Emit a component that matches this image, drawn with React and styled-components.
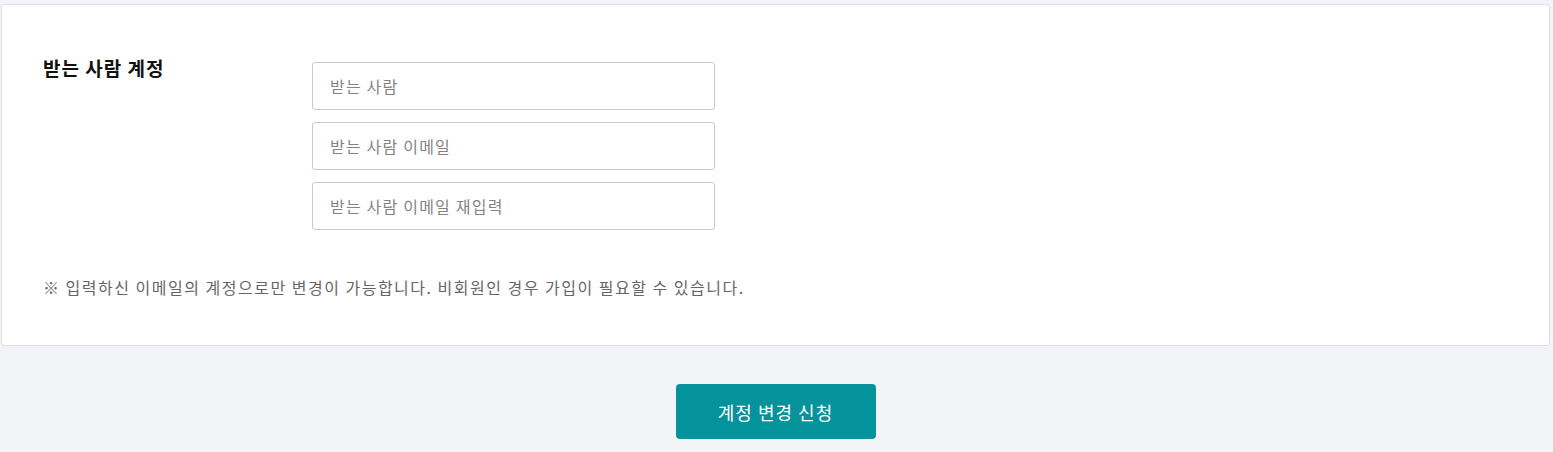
import React from "react";
import styled, { createGlobalStyle } from "styled-components";

const GlobalStyle = createGlobalStyle`
  html, body {
    margin: 0;
    padding: 0;
    background: #f3f4f8;
    font-family: "Noto Sans CJK KR", "Noto Sans", sans-serif;
  }
`;

const Page = styled.div`
  padding: 4px 3px 0 1px;
`;

const Card = styled.section`
  background: #fff;
  border: 1px solid #dde0e6;
  border-radius: 3px;
  padding: 51px 41px 47px;
`;

const FieldRow = styled.div`
  display: flex;
  align-items: flex-start;
`;

const Label = styled.div`
  width: 269px;
  font-size: 19px;
  font-weight: 700;
  line-height: 23px;
  color: #111;
  letter-spacing: 1px;
`;

const Inputs = styled.div`
  display: flex;
  flex-direction: column;
  gap: 12px;
  padding-top: 6px;
`;

const Input = styled.input`
  box-sizing: border-box;
  width: 403px;
  height: 48px;
  border: 1px solid #c3cad6;
  border-radius: 3px;
  padding: 0 17px;
  font-family: inherit;
  font-size: 16px;
  letter-spacing: 1.2px;
  color: #333;
  outline: none;

  &::placeholder {
    color: #848484;
  }
`;

const Note = styled.p`
  margin: 46px 0 0;
  font-size: 16px;
  line-height: 22px;
  color: #666;
  letter-spacing: 1.5px;
`;

const Actions = styled.div`
  display: flex;
  justify-content: center;
  padding-top: 38px;
`;

const SubmitButton = styled.button`
  width: 200px;
  height: 55px;
  border: none;
  border-radius: 4px;
  background: #05939b;
  color: #fff;
  font-family: inherit;
  font-size: 18px;
  letter-spacing: 1px;
  cursor: pointer;
`;

export default function App() {
  return (
    <>
      <GlobalStyle />
      <Page>
        <Card>
          <FieldRow>
            <Label>받는 사람 계정</Label>
            <Inputs>
              <Input placeholder="받는 사람" />
              <Input placeholder="받는 사람 이메일" />
              <Input placeholder="받는 사람 이메일 재입력" />
            </Inputs>
          </FieldRow>
          <Note>
            ※ 입력하신 이메일의 계정으로만 변경이 가능합니다. 비회원인 경우 가입이 필요할 수 있습니다.
          </Note>
        </Card>
        <Actions>
          <SubmitButton>계정 변경 신청</SubmitButton>
        </Actions>
      </Page>
    </>
  );
}
